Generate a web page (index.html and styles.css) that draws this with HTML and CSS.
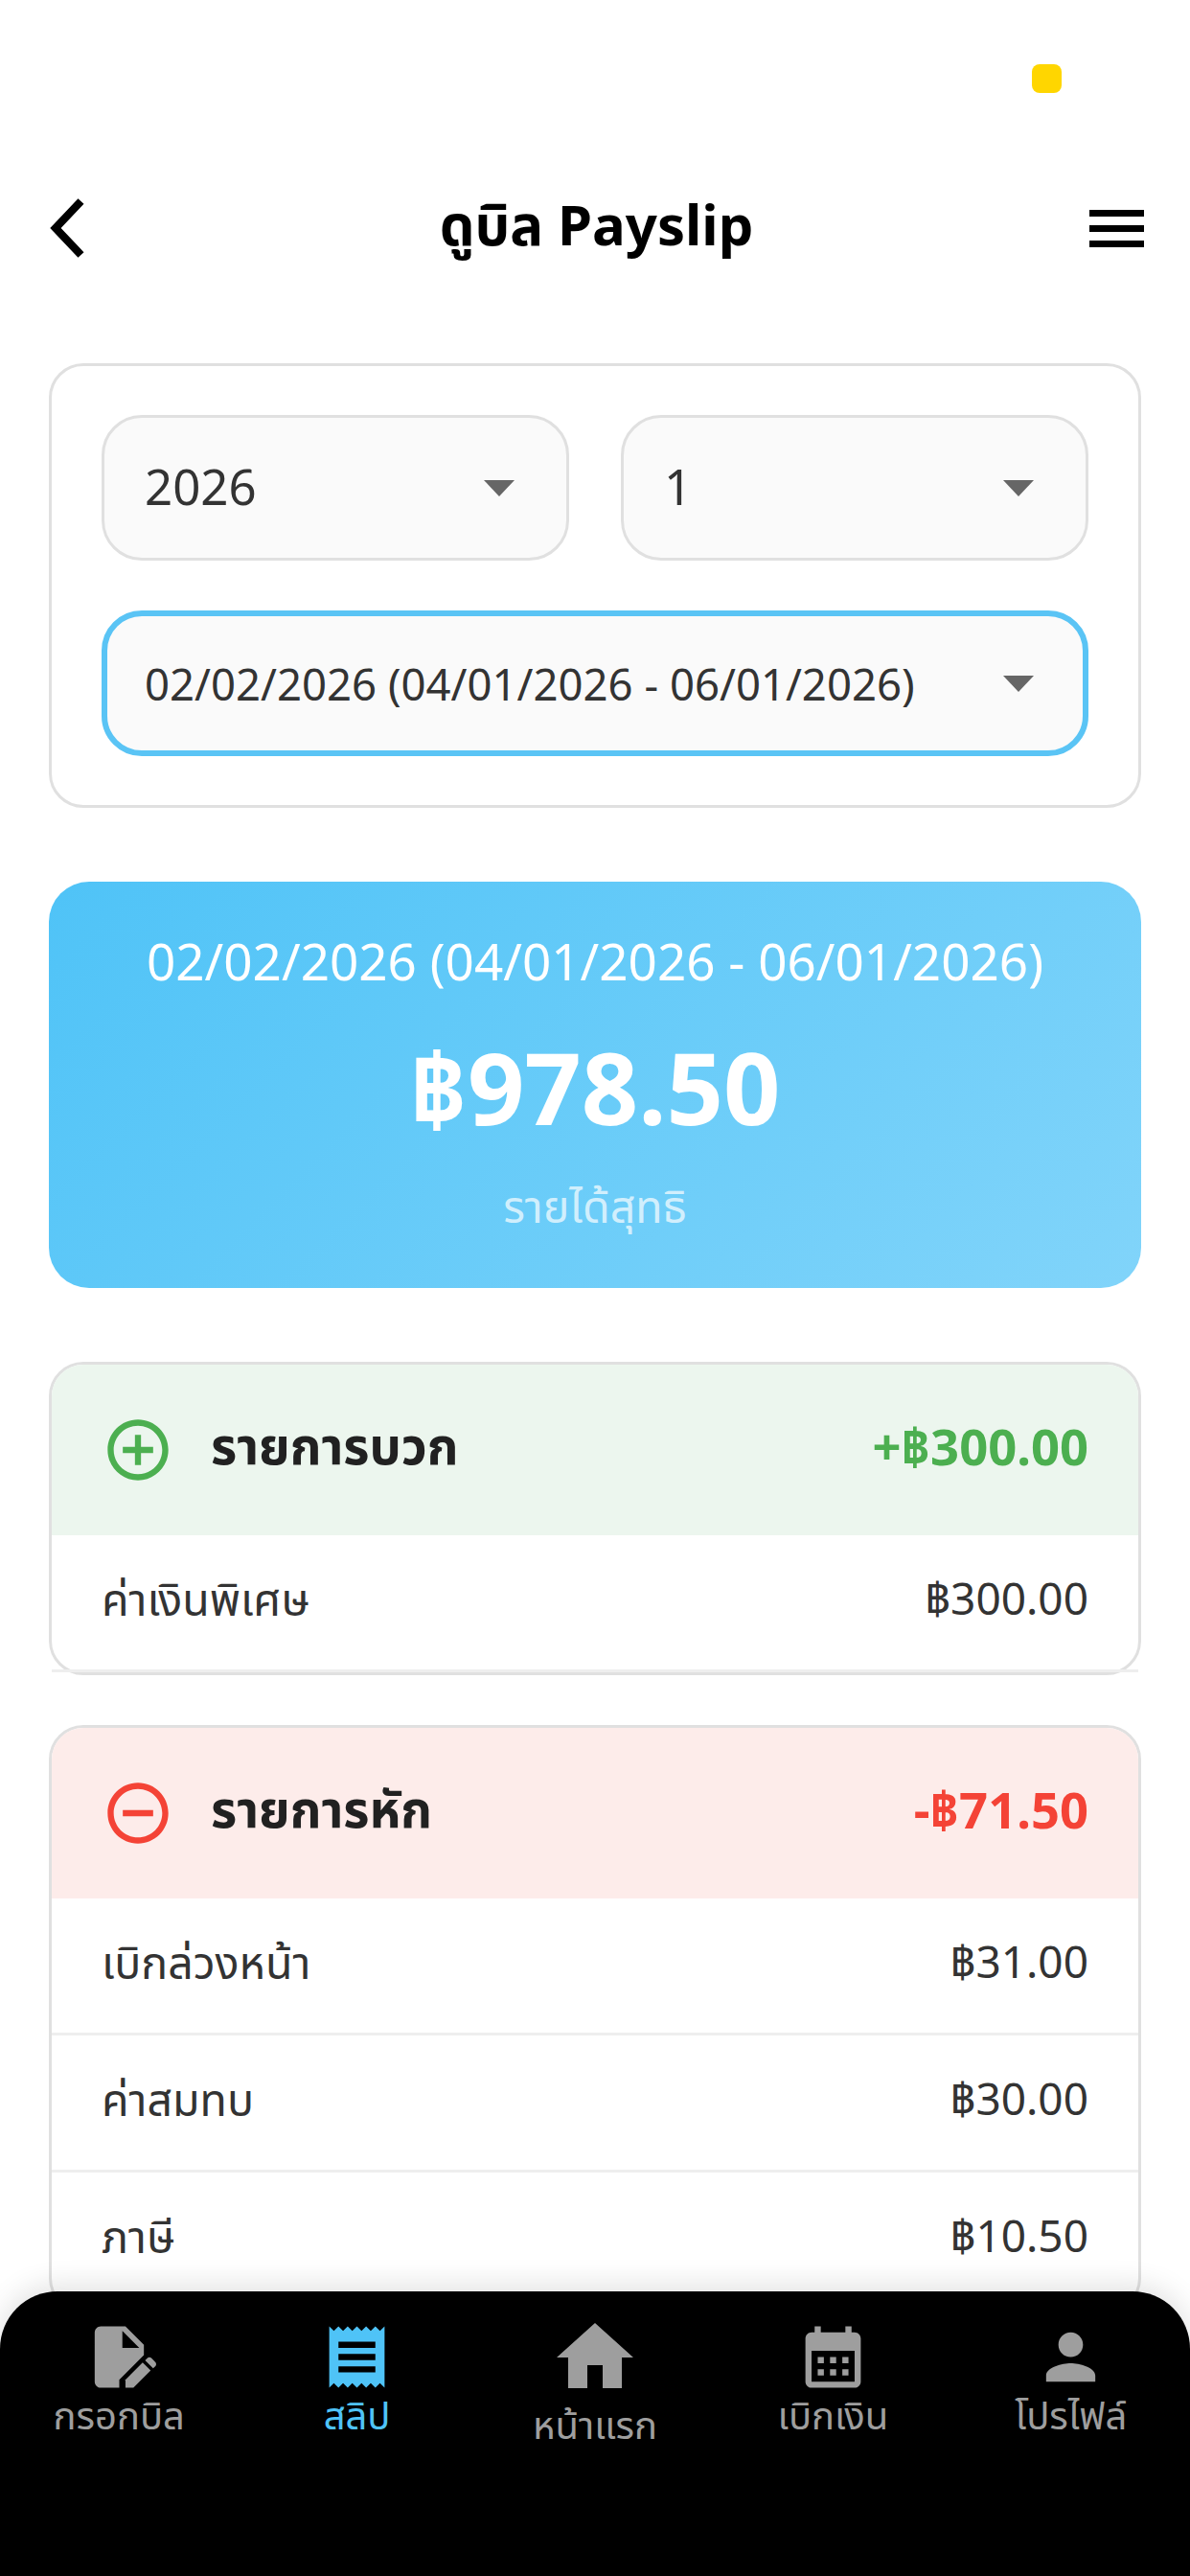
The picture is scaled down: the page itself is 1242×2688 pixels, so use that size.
FILE: index.html
```html
<!DOCTYPE html>
<html lang="th">
<head>
  <meta charset="UTF-8">
  <meta name="viewport" content="width=device-width, initial-scale=1.0">
  <title>ดูบิล Payslip</title>
  <link rel="stylesheet" href="styles.css">
</head>
<body>

  <div class="status">
    <span class="status-dot"></span>
  </div>

  <header class="topbar">
    <svg class="back" viewBox="0 0 40 64"><path d="M33.5 4 L7 32 L33.5 60" fill="none" stroke="#000" stroke-width="8.3"/></svg>
    <h1>ดูบิล Payslip</h1>
    <div class="menu"><span></span><span></span><span></span></div>
  </header>

  <main class="content">
    <section class="filter">
      <div class="filter-row">
        <div class="picker"><span>2026</span><i class="caret"></i></div>
        <div class="picker"><span>1</span><i class="caret"></i></div>
      </div>
      <div class="picker picker-active"><span>02/02/2026 (04/01/2026 - 06/01/2026)</span><i class="caret"></i></div>
    </section>

    <section class="hero">
      <div class="hero-date">02/02/2026 (04/01/2026 - 06/01/2026)</div>
      <div class="hero-amount">฿978.50</div>
      <div class="hero-label">รายได้สุทธิ</div>
    </section>

    <section class="card">
      <div class="card-head head-plus">
        <svg class="head-icon" viewBox="0 0 24 24"><path d="M13 7h-2v4H7v2h4v4h2v-4h4v-2h-4V7zm-1-5C6.48 2 2 6.48 2 12s4.48 10 10 10 10-4.48 10-10S17.52 2 12 2zm0 18c-4.41 0-8-3.59-8-8s3.59-8 8-8 8 3.59 8 8-3.59 8-8 8z"/></svg>
        <span class="head-title">รายการบวก</span>
        <span class="head-total">+฿300.00</span>
      </div>
      <div class="row"><span>ค่าเงินพิเศษ</span><span class="row-value">฿300.00</span></div>
    </section>

    <section class="card">
      <div class="card-head head-minus">
        <svg class="head-icon" viewBox="0 0 24 24"><path d="M7 11v2h10v-2H7zm5-9C6.48 2 2 6.48 2 12s4.48 10 10 10 10-4.48 10-10S17.52 2 12 2zm0 18c-4.41 0-8-3.59-8-8s3.59-8 8-8 8 3.59 8 8-3.59 8-8 8z"/></svg>
        <span class="head-title">รายการหัก</span>
        <span class="head-total">-฿71.50</span>
      </div>
      <div class="row"><span>เบิกล่วงหน้า</span><span class="row-value">฿31.00</span></div>
      <div class="row"><span>ค่าสมทบ</span><span class="row-value">฿30.00</span></div>
      <div class="row"><span>ภาษี</span><span class="row-value">฿10.50</span></div>
    </section>
  </main>

  <nav class="tabbar">
    <div class="tab">
      <svg class="tab-icon" viewBox="0 0 24 24"><path fill-rule="evenodd" d="M6 2h8l6 6v3.4l-8 8V22H6c-1.1 0-2-.9-2-2V4c0-1.1.9-2 2-2zm7 7V3.5L18.5 9H13z"/><path d="M14 22v-2.6l5.6-5.6 2.6 2.6L16.6 22H14z"/><path d="M20.4 13.1l.7-.7c.4-.4 1-.4 1.4 0l1.2 1.2c.4.4.4 1 0 1.4l-.7.7-2.6-2.6z"/></svg>
      <span>กรอกบิล</span>
    </div>
    <div class="tab tab-active">
      <svg class="tab-icon" viewBox="0 0 24 24"><path d="M18 17H6v-2h12v2zm0-4H6v-2h12v2zm0-4H6V7h12v2zM3 22l1.5-1.5L6 22l1.5-1.5L9 22l1.5-1.5L12 22l1.5-1.5L15 22l1.5-1.5L18 22l1.5-1.5L21 22V2l-1.5 1.5L18 2l-1.5 1.5L15 2l-1.5 1.5L12 2l-1.5 1.5L9 2 7.5 3.5 6 2 4.5 3.5 3 2v20z"/></svg>
      <span>สลิป</span>
    </div>
    <div class="tab">
      <svg class="tab-icon tab-icon-big" viewBox="0 0 24 24"><path d="M10 20v-6h4v6h5v-8h3L12 3 2 12h3v8z"/></svg>
      <span>หน้าแรก</span>
    </div>
    <div class="tab">
      <svg class="tab-icon" viewBox="0 0 24 24"><path fill-rule="evenodd" d="M19 4h-1V2h-2v2H8V2H6v2H5c-1.1 0-2 .9-2 2v14c0 1.1.9 2 2 2h14c1.1 0 2-.9 2-2V6c0-1.1-.9-2-2-2zm0 16H5V10h14v10z"/><path d="M7 12h2v2H7zM11 12h2v2h-2zM15 12h2v2h-2zM7 16h2v2H7zM11 16h2v2h-2zM15 16h2v2h-2z"/></svg>
      <span>เบิกเงิน</span>
    </div>
    <div class="tab">
      <svg class="tab-icon" viewBox="0 0 24 24"><path d="M12 12c2.21 0 4-1.79 4-4s-1.79-4-4-4-4 1.79-4 4 1.79 4 4 4zm0 2c-2.67 0-8 1.34-8 4v2h16v-2c0-2.66-5.33-4-8-4z"/></svg>
      <span>โปรไฟล์</span>
    </div>
  </nav>

</body>
</html>
```

FILE: styles.css
```css
* {
  box-sizing: border-box;
}

html, body {
  margin: 0;
  padding: 0;
}

body {
  width: 1242px;
  height: 2688px;
  overflow: hidden;
  position: relative;
  background-color: #fff;
  font-family: "Noto Sans", "Noto Sans Thai", "Open Sans", sans-serif;
  color: #212121;
}

.status {
  height: 178px;
  padding: 67px 134px 0 0;
  display: flex;
  justify-content: flex-end;
}

.status-dot {
  width: 31px;
  height: 30px;
  border-radius: 8px;
  background-color: #ffd600;
}

.topbar {
  height: 120px;
  padding: 0 48px 0 51px;
  display: grid;
  grid-template-columns: 1fr auto 1fr;
  align-items: center;
}

.back {
  width: 40px;
  height: 64px;
}

.topbar h1 {
  margin: 0;
  font-size: 58px;
  font-weight: 700;
  color: #000;
}

.menu {
  justify-self: end;
  width: 57px;
  margin-top: 1px;
  display: flex;
  flex-direction: column;
  gap: 9px;
}

.menu span {
  height: 7px;
  background-color: #000;
}

.content {
  padding: 81px 51px 0;
}

.filter {
  height: 464px;
  padding: 51px 52px;
  border: 3px solid #e0e0e0;
  border-radius: 36px;
  display: flex;
  flex-direction: column;
  gap: 52px;
}

.filter-row {
  display: flex;
  gap: 54px;
}

.picker {
  flex: 1;
  height: 152px;
  padding: 0 54px 0 42px;
  display: flex;
  align-items: center;
  justify-content: space-between;
  background-color: #fafafa;
  border: 3px solid #e0e0e0;
  border-radius: 42px;
  font-size: 51px;
  line-height: 68px;
  color: #333;
}

.picker span {
  margin-top: -4px;
}

.picker-active {
  flex: none;
  padding-left: 39px;
  padding-right: 51px;
  border: 6px solid #5ac4f5;
  font-size: 45.5px;
}

.picker-active span {
  margin-top: 0;
}

.caret {
  width: 0;
  height: 0;
  border-left: 16px solid transparent;
  border-right: 16px solid transparent;
  border-top: 17px solid #666;
}

.hero {
  height: 424px;
  margin-top: 77px;
  border-radius: 42px;
  background: linear-gradient(135deg, #4fc3f7, #81d4fa);
  color: #fff;
  display: flex;
  flex-direction: column;
  align-items: center;
}

.hero-date {
  margin-top: 50px;
  font-size: 53px;
  line-height: 66px;
}

.hero-amount {
  margin-top: 28px;
  font-size: 104px;
  line-height: 140px;
  font-weight: 700;
}

.hero-label {
  margin-top: 25px;
  font-size: 46.5px;
  line-height: 58px;
  color: rgba(255, 255, 255, 0.7);
}

.card {
  margin-top: 52px;
  border: 3px solid #e0e0e0;
  border-radius: 36px;
  background-color: #fff;
}

.hero + .card {
  margin-top: 77px;
}

.card-head {
  height: 178px;
  padding: 0 52px;
  border-radius: 33px 33px 0 0;
  display: flex;
  align-items: center;
}

.head-icon {
  width: 76px;
  height: 76px;
  fill: currentColor;
}

.head-title {
  margin-left: 38px;
  margin-top: -2px;
  flex: 1;
  font-size: 52.5px;
  font-weight: 700;
  color: #212121;
}

.head-total {
  font-size: 52.5px;
  font-weight: 700;
}

.head-plus {
  background-color: #ecf6ee;
  color: #4caf50;
}

.head-minus {
  background-color: #fdecea;
  color: #f44336;
}

.row {
  height: 143px;
  padding: 0 52px 2px;
  display: flex;
  align-items: center;
  justify-content: space-between;
  border-bottom: 3px solid #eee;
  font-size: 46.5px;
  color: #333;
}

.row-value {
  font-size: 46px;
}

.tabbar {
  position: absolute;
  left: 0;
  right: 0;
  bottom: 0;
  height: 297px;
  padding-bottom: 113px;
  display: flex;
  align-items: center;
  background-color: #000;
  border-radius: 60px 60px 0 0;
  box-shadow: 0 -6px 30px rgba(0, 0, 0, 0.12);
}

.tab {
  flex: 1;
  display: flex;
  flex-direction: column;
  align-items: center;
  font-size: 40px;
  line-height: 50px;
  color: #9e9e9e;
}

.tab span {
  margin-top: -3px;
}

.tab-icon {
  width: 77px;
  height: 77px;
  fill: currentColor;
}

.tab-icon-big {
  width: 96px;
  height: 96px;
}

.tab-active {
  color: #4fc3f7;
}
```
